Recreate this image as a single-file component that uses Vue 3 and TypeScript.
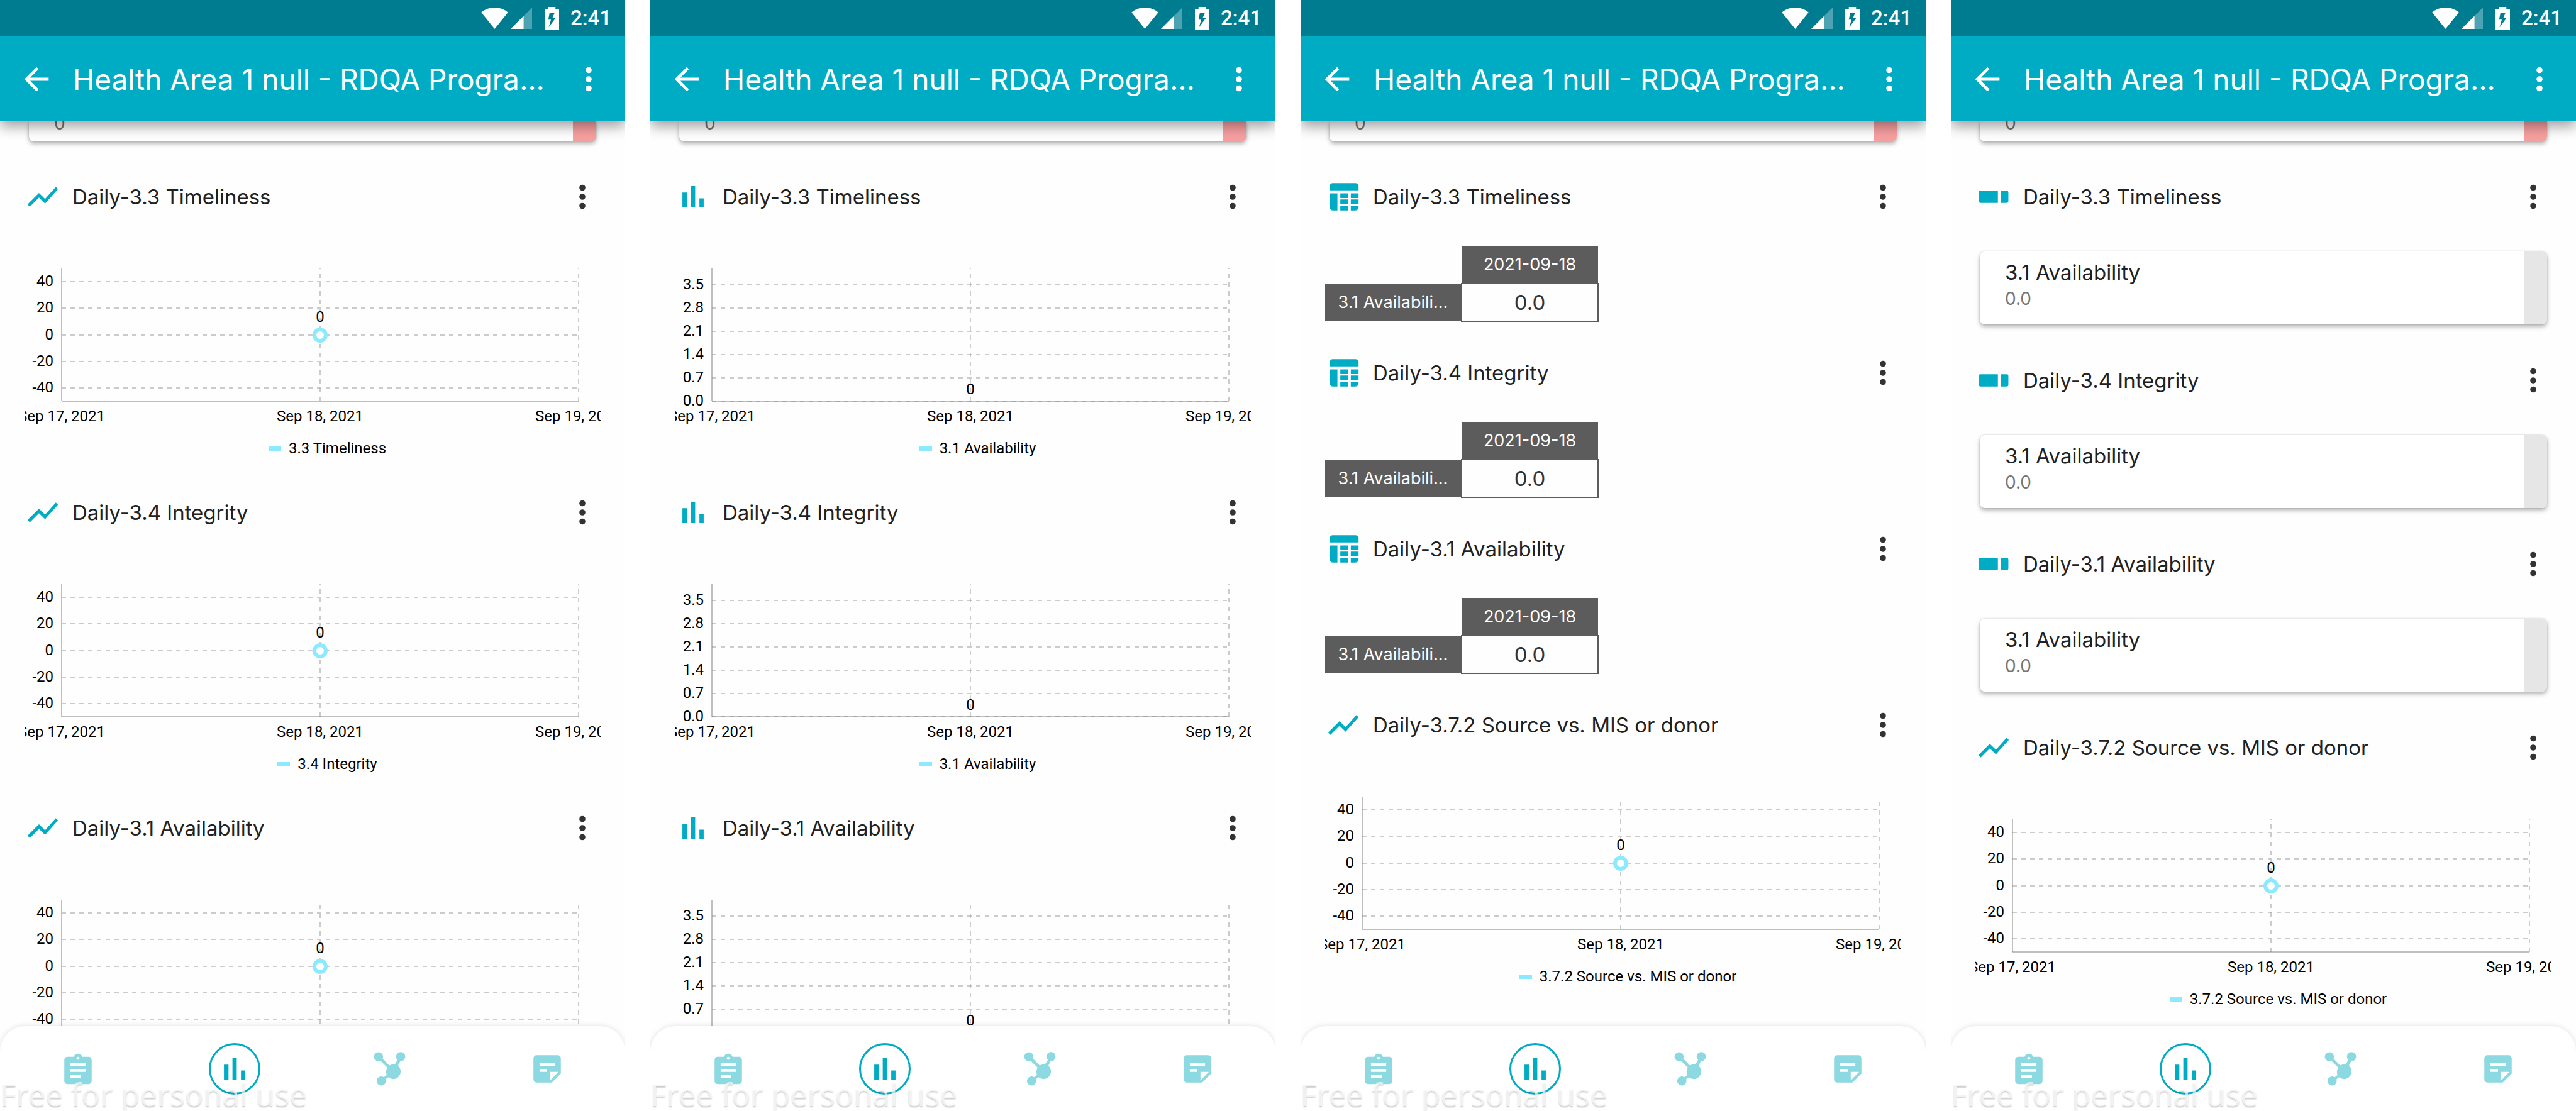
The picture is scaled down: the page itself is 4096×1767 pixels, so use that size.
<script setup lang="ts">
interface Tick {
  label: string
  y: number
}

interface Section {
  kind: 'line' | 'bar' | 'table' | 'card'
  title: string
  series: string
}

interface Phone {
  id: string
  sections: Section[]
}

const icons: Record<Section['kind'], string> = {
  line: 'M3.5 18.49l6-6.01 4 4L22 6.92l-1.41-1.41-7.09 7.97-4-4L2 16.99z',
  bar: 'M5 9.2h3V19H5zM10.6 5h2.8v14h-2.8zM16.2 13H19v6h-2.8z',
  table:
    'M5 3h15a2 2 0 0 1 2 2v2.8H3V5a2 2 0 0 1 2-2zM3 9.7h5.1V21H5a2 2 0 0 1-2-2zM10 9.7h5.1v3.1H10zM16.9 9.7H22v3.1h-5.1zM10 13.8h5.1v3H10zM16.9 13.8H22v3h-5.1zM10 17.8h5.1V21H10zM16.9 17.8H22V19a2 2 0 0 1-2 2h-3.1z',
  card: 'M3.3 8h11.5v8H3.3a1 1 0 0 1-1-1V9a1 1 0 0 1 1-1zM16.8 8h3.9a1 1 0 0 1 1 1v6a1 1 0 0 1-1 1h-3.9z',
}

const dots =
  'M12 8a2 2 0 1 0 0-4 2 2 0 0 0 0 4zm0 2a2 2 0 1 0 0 4 2 2 0 0 0 0-4zm0 6a2 2 0 1 0 0 4 2 2 0 0 0 0-4z'

const navItems = [
  {
    name: 'Details',
    path: 'M19 4h-4.18C14.4 2.84 13.3 2 12 2s-2.4.84-2.82 2H5c-1.1 0-2 .9-2 2v14c0 1.1.9 2 2 2h14c1.1 0 2-.9 2-2V6c0-1.1-.9-2-2-2zm-7 0c.55 0 1 .45 1 1s-.45 1-1 1-1-.45-1-1 .45-1 1-1zm2 14H7v-2h7v2zm3-4H7v-2h10v2zm0-4H7V8h10v2z',
  },
  { name: 'Analytics', path: icons.bar },
  {
    name: 'Relationships',
    path: 'M4 1a3 3 0 0 1 2.8 4.2l4.4 4.5a5 5 0 0 1 2.6-.7 5 5 0 0 1 .9.1l1.9-3A3 3 0 1 1 18.4 6.9L16.9 9.9A5 5 0 1 1 10.4 17.5L8.7 18.9A3 3 0 1 1 7.6 17.5L9.5 16A5 5 0 0 1 9.9 11.2L5.4 6.7A3 3 0 1 1 4 1z',
  },
  {
    name: 'Notes',
    path: 'M5 3h14a2 2 0 0 1 2 2v10.1L15.1 21H5a2 2 0 0 1-2-2V5a2 2 0 0 1 2-2zM7 8v2h10V8zM7 12v2h5v-2zM14 14v5.5l5.5-5.5z',
  },
]

const PLOT = { left: 59, mid: 470, right: 881, top: 7, bottom: 218 }

function scale(values: number[], min: number, max: number, digits: number): Tick[] {
  const height = PLOT.bottom - PLOT.top
  return values.map((v) => ({
    label: v.toFixed(digits),
    y: Math.round(PLOT.bottom - ((v - min) / (max - min)) * height),
  }))
}

const ticks: Record<'line' | 'bar', Tick[]> = {
  line: scale([40, 20, 0, -20, -40], -50, 50, 0),
  bar: scale([3.5, 2.8, 2.1, 1.4, 0.7, 0], 0, 4, 1),
}

const dates = [
  { label: 'Sep 17, 2021', x: PLOT.left },
  { label: 'Sep 18, 2021', x: PLOT.mid },
  { label: 'Sep 19, 2021', x: PLOT.right },
]

const source: Section = {
  kind: 'line',
  title: 'Daily-3.7.2 Source vs. MIS or donor',
  series: '3.7.2 Source vs. MIS or donor',
}

function daily(kind: Section['kind'], series?: string[]): Section[] {
  const names = ['3.3 Timeliness', '3.4 Integrity', '3.1 Availability']
  return names.map((name, i) => ({
    kind,
    title: 'Daily-' + name,
    series: series ? series[i] : '3.1 Availability',
  }))
}

const phones: Phone[] = [
  { id: 'line', sections: daily('line', ['3.3 Timeliness', '3.4 Integrity', '3.1 Availability']) },
  { id: 'bar', sections: daily('bar') },
  { id: 'table', sections: [...daily('table'), source] },
  { id: 'card', sections: [...daily('card'), source] },
]
</script>

<template>
  <main class="board">
    <article v-for="phone in phones" :key="phone.id" class="phone">
      <div class="status">
        <svg class="wifi" viewBox="0 0 60 48" aria-hidden="true">
          <path d="M30 48L0 11C8 4 18 0 30 0s22 4 30 11z" fill="#fff" />
        </svg>
        <svg class="signal" viewBox="0 0 48 48" aria-hidden="true">
          <path d="M48 0v48H0z" fill="#fff" fill-opacity=".3" />
          <path d="M29 19v29H0z" fill="#fff" />
        </svg>
        <svg class="battery" viewBox="0 0 32 50" aria-hidden="true">
          <path
            fill="#fff"
            fill-rule="evenodd"
            d="M8 0h16v5h8v45H0V5h8zM11 13L8 28h6L9 45l15-20h-7l5-12z"
          />
        </svg>
        <span class="clock">2:41</span>
      </div>

      <header class="appbar">
        <button class="icon-btn" type="button" aria-label="Back">
          <svg viewBox="0 0 24 24">
            <path d="M20 11H7.83l5.59-5.59L12 4l-8 8 8 8 1.41-1.41L7.83 13H20z" />
          </svg>
        </button>
        <h1>Health Area 1 null - RDQA Progra…</h1>
        <button class="icon-btn" type="button" aria-label="More options">
          <svg viewBox="0 0 24 24"><path :d="dots" /></svg>
        </button>
      </header>

      <div class="list">
        <div class="card peek">
          <div class="card-body"><span class="card-value">0</span></div>
          <div class="strip red"></div>
        </div>

        <section v-for="s in phone.sections" :key="s.title" :class="'of-' + s.kind">
          <div class="head">
            <svg class="kind-icon" viewBox="0 0 24 24" aria-hidden="true">
              <path :d="icons[s.kind]" />
            </svg>
            <h2>{{ s.title }}</h2>
            <button class="icon-btn" type="button" :aria-label="'Options for ' + s.title">
              <svg viewBox="0 0 24 24"><path :d="dots" /></svg>
            </button>
          </div>

          <figure v-if="s.kind === 'line' || s.kind === 'bar'" class="chart">
            <svg viewBox="0 0 916 260">
              <g class="grid">
                <line
                  v-for="t in ticks[s.kind]"
                  :key="t.label"
                  :x1="PLOT.left"
                  :x2="PLOT.right"
                  :y1="t.y"
                  :y2="t.y"
                />
                <line :x1="PLOT.mid" :x2="PLOT.mid" :y1="PLOT.bottom" :y2="PLOT.top" />
                <line :x1="PLOT.right" :x2="PLOT.right" :y1="PLOT.bottom" :y2="PLOT.top" />
              </g>
              <path
                class="axis"
                :d="`M${PLOT.left} ${PLOT.top}V${PLOT.bottom}H${PLOT.right}`"
              />
              <text
                v-for="t in ticks[s.kind]"
                :key="t.label"
                x="46"
                :y="t.y + 7"
                text-anchor="end"
              >{{ t.label }}</text>
              <text
                v-for="d in dates"
                :key="d.label"
                :x="d.x"
                y="250"
                text-anchor="middle"
              >{{ d.label }}</text>
              <template v-if="s.kind === 'line'">
                <circle class="point" :cx="PLOT.mid" cy="113" r="9" />
                <text :x="PLOT.mid" y="92" text-anchor="middle">0</text>
              </template>
              <text v-else :x="PLOT.mid" y="207" text-anchor="middle">0</text>
            </svg>
            <figcaption>
              <span class="swatch"></span>
              <span>{{ s.series }}</span>
            </figcaption>
          </figure>

          <table v-else-if="s.kind === 'table'">
            <thead>
              <tr>
                <td></td>
                <th scope="col">2021-09-18</th>
              </tr>
            </thead>
            <tbody>
              <tr>
                <th scope="row">3.1 Availabili…</th>
                <td class="value">0.0</td>
              </tr>
            </tbody>
          </table>

          <div v-else class="card">
            <div class="card-body">
              <span class="card-name">{{ s.series }}</span>
              <span class="card-value">0.0</span>
            </div>
            <div class="strip"></div>
          </div>
        </section>
      </div>

      <nav class="tabs">
        <button
          v-for="item in navItems"
          :key="item.name"
          type="button"
          class="tab"
          :class="{ active: item.name === 'Analytics' }"
          :aria-label="item.name"
        >
          <span class="ring">
            <svg viewBox="0 0 24 24"><path fill-rule="evenodd" :d="item.path" /></svg>
          </span>
        </button>
      </nav>

      <div class="watermark">Free for personal use</div>
    </article>
  </main>
</template>

<style>
body {
  margin: 0;
  background: #fff;
}
</style>

<style scoped>
.board {
  display: grid;
  grid-template-columns: repeat(4, minmax(0, 1fr));
  gap: 40px;
  height: 100vh;
  font-family: Inter, Roboto, sans-serif;
  color: #212121;
}

.phone {
  position: relative;
  display: flex;
  flex-direction: column;
  min-height: 0;
  overflow: hidden;
  background: #fefefe;
}

button {
  padding: 0;
  border: 0;
  background: none;
  color: inherit;
  font: inherit;
}

.status {
  position: relative;
  z-index: 3;
  flex: none;
  display: flex;
  justify-content: flex-end;
  align-items: center;
  box-sizing: border-box;
  height: 58px;
  padding-right: 22px;
  background: #007c91;
  color: #fff;
}

.wifi {
  width: 43px;
  height: 34px;
}

.signal {
  width: 34px;
  height: 34px;
  margin: 0 20px 0 4px;
}

.battery {
  width: 23px;
  height: 36px;
  margin-right: 18px;
}

.clock {
  font-family: Roboto, sans-serif;
  font-size: 33px;
  line-height: 40px;
  font-weight: 500;
}

.appbar {
  position: relative;
  z-index: 2;
  flex: none;
  display: flex;
  align-items: center;
  height: 135px;
  padding: 0 29px;
  background: #00acc4;
  color: #fff;
  box-shadow: 0 8px 20px rgba(0, 0, 0, 0.38);
}

.icon-btn {
  flex: none;
  width: 58px;
  height: 58px;
}

svg {
  display: block;
  fill: currentColor;
}

.icon-btn svg {
  width: 100%;
  height: 100%;
}

h1 {
  flex: 1;
  margin: 0 0 0 29px;
  font-size: 46px;
  line-height: 58px;
  font-weight: 400;
  white-space: nowrap;
}

.list {
  flex: 1;
  min-height: 0;
  overflow: hidden;
}

.card {
  display: flex;
  margin: 58px 46px 0;
  height: 116px;
  border-radius: 8px;
  background: #fff;
  box-shadow: 0 4px 7px rgba(0, 0, 0, 0.28), 0 0 3px rgba(0, 0, 0, 0.16);
  overflow: hidden;
}

.card-body {
  flex: 1;
  display: flex;
  flex-direction: column;
  padding: 12px 40px 0;
}

.card-name {
  font-size: 33px;
  line-height: 42px;
}

.card-value {
  font-size: 28px;
  line-height: 42px;
  color: #757575;
}

.strip {
  width: 37px;
  background: #e6e6e6;
}

.strip.red {
  background: #f8a0a0;
}

.peek {
  height: 32px;
  margin-top: 0;
  border-radius: 0 0 8px 8px;
}

.peek .card-body {
  justify-content: flex-end;
  padding-bottom: 8px;
}

section {
  padding-top: 59px;
}

.of-table + section {
  padding-top: 52px;
}

.of-card + section {
  padding-top: 60px;
}

.head {
  display: flex;
  align-items: center;
  padding: 0 39px;
  height: 58px;
}

.head .icon-btn {
  color: #333;
}

.kind-icon {
  flex: none;
  width: 58px;
  height: 58px;
  color: #00acc4;
}

h2 {
  flex: 1;
  margin: 0 0 0 18px;
  font-size: 33px;
  line-height: 40px;
  font-weight: 400;
}

.chart {
  margin: 78px 39px 0;
  font-family: Roboto, sans-serif;
}

.chart svg {
  width: 100%;
  height: auto;
  overflow: hidden;
}

.chart text {
  font-size: 24px;
  fill: #000;
}

.grid line {
  stroke: #999;
  stroke-width: 1;
  stroke-dasharray: 7 7;
}

.axis {
  fill: none;
  stroke: #808080;
  stroke-width: 1;
}

.point {
  fill: #fff;
  stroke: #8ceaff;
  stroke-width: 6;
}

figcaption {
  display: flex;
  justify-content: center;
  align-items: center;
  gap: 12px;
  margin-top: 19px;
  padding-left: 47px;
  font-size: 24px;
  line-height: 28px;
  color: #000;
}

.swatch {
  width: 20px;
  height: 7px;
  background: #8ceaff;
}

table {
  table-layout: fixed;
  width: 435px;
  margin: 49px 0 0 39px;
  border-collapse: collapse;
}

table tr {
  height: 60px;
}

th,
td {
  padding: 0;
  text-align: center;
}

th {
  background: #5c5c5c;
  color: #fff;
  font-size: 27px;
  line-height: 34px;
  font-weight: 400;
}

.value {
  border: 2px solid #5c5c5c;
  color: #333;
  font-size: 33px;
  line-height: 40px;
}

.tabs {
  position: relative;
  z-index: 2;
  flex: none;
  display: grid;
  grid-template-columns: repeat(4, 1fr);
  height: 135px;
  margin-top: -40px;
  border-radius: 40px 40px 0 0;
  background: #fff;
  box-shadow: 0 0 10px rgba(0, 0, 0, 0.12);
}

.tab {
  display: grid;
  place-items: center;
  color: #8cd9e1;
}

.ring {
  box-sizing: border-box;
  display: grid;
  place-items: center;
  width: 82px;
  height: 82px;
  border-radius: 50%;
}

.ring svg {
  width: 58px;
  height: 58px;
}

.active {
  color: #00acc4;
}

.active .ring {
  border: 3px solid #00acc4;
}

.watermark {
  position: absolute;
  z-index: 3;
  left: 0;
  bottom: -7px;
  font-family: "Noto Sans", sans-serif;
  font-size: 49px;
  line-height: 68px;
  color: rgba(255, 255, 255, 0.7);
  text-shadow: 0 2px 2px rgba(0, 0, 0, 0.2);
  white-space: nowrap;
  pointer-events: none;
}
</style>
